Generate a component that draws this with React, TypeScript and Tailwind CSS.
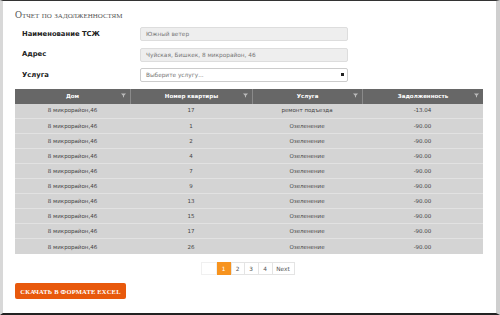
import { type ReactNode } from "react";

interface Row {
  house: string;
  flat: string;
  service: string;
  debt: string;
}

const rows: Row[] = [
  { house: "8 микрорайон,46", flat: "17", service: "ремонт подъезда", debt: "-13.04" },
  { house: "8 микрорайон,46", flat: "1", service: "Озеленение", debt: "-90.00" },
  { house: "8 микрорайон,46", flat: "2", service: "Озеленение", debt: "-90.00" },
  { house: "8 микрорайон,46", flat: "4", service: "Озеленение", debt: "-90.00" },
  { house: "8 микрорайон,46", flat: "7", service: "Озеленение", debt: "-90.00" },
  { house: "8 микрорайон,46", flat: "9", service: "Озеленение", debt: "-90.00" },
  { house: "8 микрорайон,46", flat: "13", service: "Озеленение", debt: "-90.00" },
  { house: "8 микрорайон,46", flat: "15", service: "Озеленение", debt: "-90.00" },
  { house: "8 микрорайон,46", flat: "17", service: "Озеленение", debt: "-90.00" },
  { house: "8 микрорайон,46", flat: "26", service: "Озеленение", debt: "-90.00" },
];

const columns = [
  { title: "Дом", width: "w-[115px]" },
  { title: "Номер квартиры", width: "w-[122px]" },
  { title: "Услуга", width: "w-[110px]" },
  { title: "Задолженность", width: "flex-1" },
];

function FieldRow({ label, children }: { label: string; children: ReactNode }) {
  return (
    <div className="flex items-center h-[14px]">
      <div className="w-[125px] pl-[7px] text-[6.8px] font-bold text-[#222]">{label}</div>
      {children}
    </div>
  );
}

function FilterIcon() {
  return (
    <svg width="5" height="5" viewBox="0 0 5 5" className="absolute right-[4px] top-[4px]">
      <path d="M0 0.5h5L3 2.8V4.6L2 4V2.8z" fill="#bbb" />
    </svg>
  );
}

export default function App() {
  return (
    <div className="w-[500px] h-[315px] bg-white border-t border-t-[#333] border-l-[3px] border-l-[#d8d8d8] border-r-[4px] border-r-[#cfcfcf] border-b-2 border-b-[#222] overflow-hidden font-['DejaVu_Sans',Verdana,sans-serif]">
      <div className="pl-[12px] pr-[12px]">
        <h1 className="pt-[9px] h-[26px] text-[9.7px] text-[#555] [font-variant:small-caps] font-['Liberation_Serif',serif] leading-none">
          Отчет по задолженностям
        </h1>

        <div className="flex flex-col gap-[6.5px]">
          <FieldRow label="Наименование ТСЖ">
            <div className="w-[208px] h-[14px] rounded-[2px] border border-[#ddd] bg-[#eee] px-[5px] text-[5.8px] leading-[12px] text-[#777]">
              Южный ветер
            </div>
          </FieldRow>
          <FieldRow label="Адрес">
            <div className="w-[208px] h-[14px] rounded-[2px] border border-[#ddd] bg-[#eee] px-[5px] text-[5.8px] leading-[12px] text-[#777]">
              Чуйская, Бишкек, 8 микрорайон, 46
            </div>
          </FieldRow>
          <FieldRow label="Услуга">
            <div className="relative w-[208px] h-[14px] rounded-[2px] border border-[#ccc] bg-white px-[5px] text-[5.8px] leading-[12px] text-[#777]">
              Выберите услугу...
              <span className="absolute right-[3px] top-[4px] w-[3px] h-[3px] bg-[#222]" />
            </div>
          </FieldRow>
        </div>

        <div className="mt-[6.5px] w-[468px] bg-[#d4d4d4] text-[5.5px]">
          <div className="flex h-[15px] bg-[#676767] text-white font-bold">
            {columns.map((c, i) => (
              <div
                key={c.title}
                className={`relative ${c.width} flex items-center justify-center ${i > 0 ? "border-l border-[#8a8a8a]" : ""}`}
              >
                {c.title}
                <FilterIcon />
              </div>
            ))}
          </div>
          {rows.map((r, i) => (
            <div key={i} className="flex h-[15.1px] items-center text-[#444] border-b border-[#e2e2e2] last:border-b-0">
              <div className="w-[115px] text-center">{r.house}</div>
              <div className="w-[122px] text-center">{r.flat}</div>
              <div className="w-[110px] text-center">{r.service}</div>
              <div className="flex-1 text-center">{r.debt}</div>
            </div>
          ))}
        </div>

        <div className="flex justify-center mt-[8px] pr-[4px]">
          <div className="flex h-[13px] text-[5.8px] text-[#555]">
            <div className="w-[16px] border border-[#f0f0f0]" />
            <div className="w-[14px] bg-[#f7931e] text-white flex items-center justify-center">1</div>
            <div className="w-[14px] border border-[#e4e4e4] flex items-center justify-center">2</div>
            <div className="w-[14px] border border-l-0 border-[#e4e4e4] flex items-center justify-center">3</div>
            <div className="w-[14px] border border-l-0 border-[#e4e4e4] flex items-center justify-center">4</div>
            <div className="w-[22px] border border-l-0 border-[#e4e4e4] flex items-center justify-center">Next</div>
          </div>
        </div>

        <button className="mt-[8px] w-[111px] h-[16px] rounded-[2px] bg-[#e8590c] text-white font-bold font-['Liberation_Serif',serif] text-[6.5px] tracking-[0.2px]">
          СКАЧАТЬ В ФОРМАТЕ EXCEL
        </button>
      </div>
    </div>
  );
}
